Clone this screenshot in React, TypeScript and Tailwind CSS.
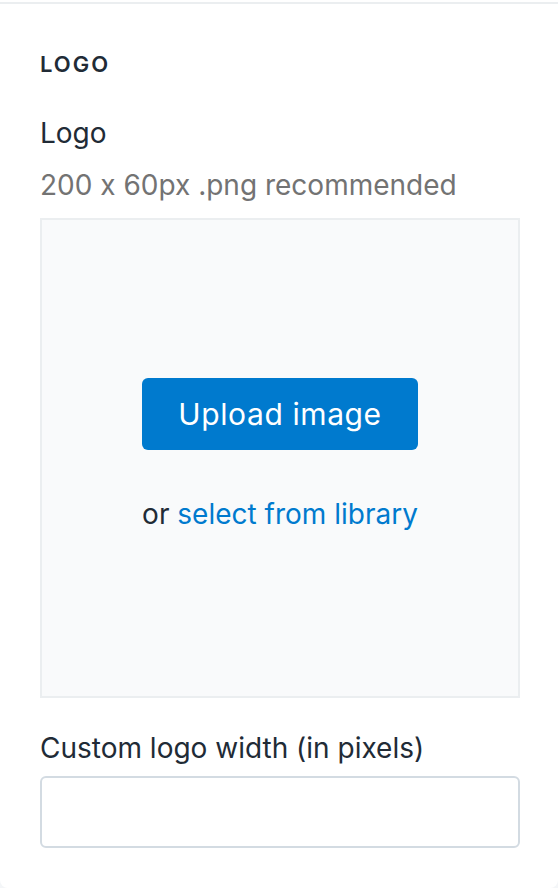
import React from "react";

export default function App() {
  return (
    <div className="w-[558px] h-[888px] bg-[#f4f6f8] font-['Inter','Noto_Sans',sans-serif] [font-feature-settings:'calt'_0]">
      <div className="h-[888px] bg-white pt-[2px] rounded-b-[8px] flex flex-col">
        <div className="border-t-2 border-[#ebeef0]" />
        <div className="pl-[40px] pr-[38px] pt-[46px] flex flex-col">
          <h2 className="text-[22px] leading-[28px] font-semibold tracking-[0.09em] text-[#212b36]">LOGO</h2>
          <div className="mt-[37px] text-[28px] leading-[36px] text-[#212b36]">Logo</div>
          <div className="mt-[16px] text-[28px] leading-[36px] text-[#737373]">200 x 60px .png recommended</div>
          <div className="mt-[15px] h-[480px] border-2 border-[#ebeef0] bg-[#f9fafb] flex flex-col items-center pt-[158px]">
            <button className="w-[276px] h-[72px] rounded-[6px] bg-[#007ace] text-white text-[30px] tracking-[0.6px]">Upload image</button>
            <div className="mt-[46px] text-[28px] leading-[36px] text-[#212b36]">
              or <span className="text-[#007ace]">select from library</span>
            </div>
          </div>
          <div className="mt-[32px] text-[28px] leading-[36px] text-[#212b36]">Custom logo width (in pixels)</div>
          <input className="mt-[10px] h-[72px] w-full border-2 border-[#d3dbe2] rounded-[6px] bg-white outline-none" />
        </div>
      </div>
    </div>
  );
}
